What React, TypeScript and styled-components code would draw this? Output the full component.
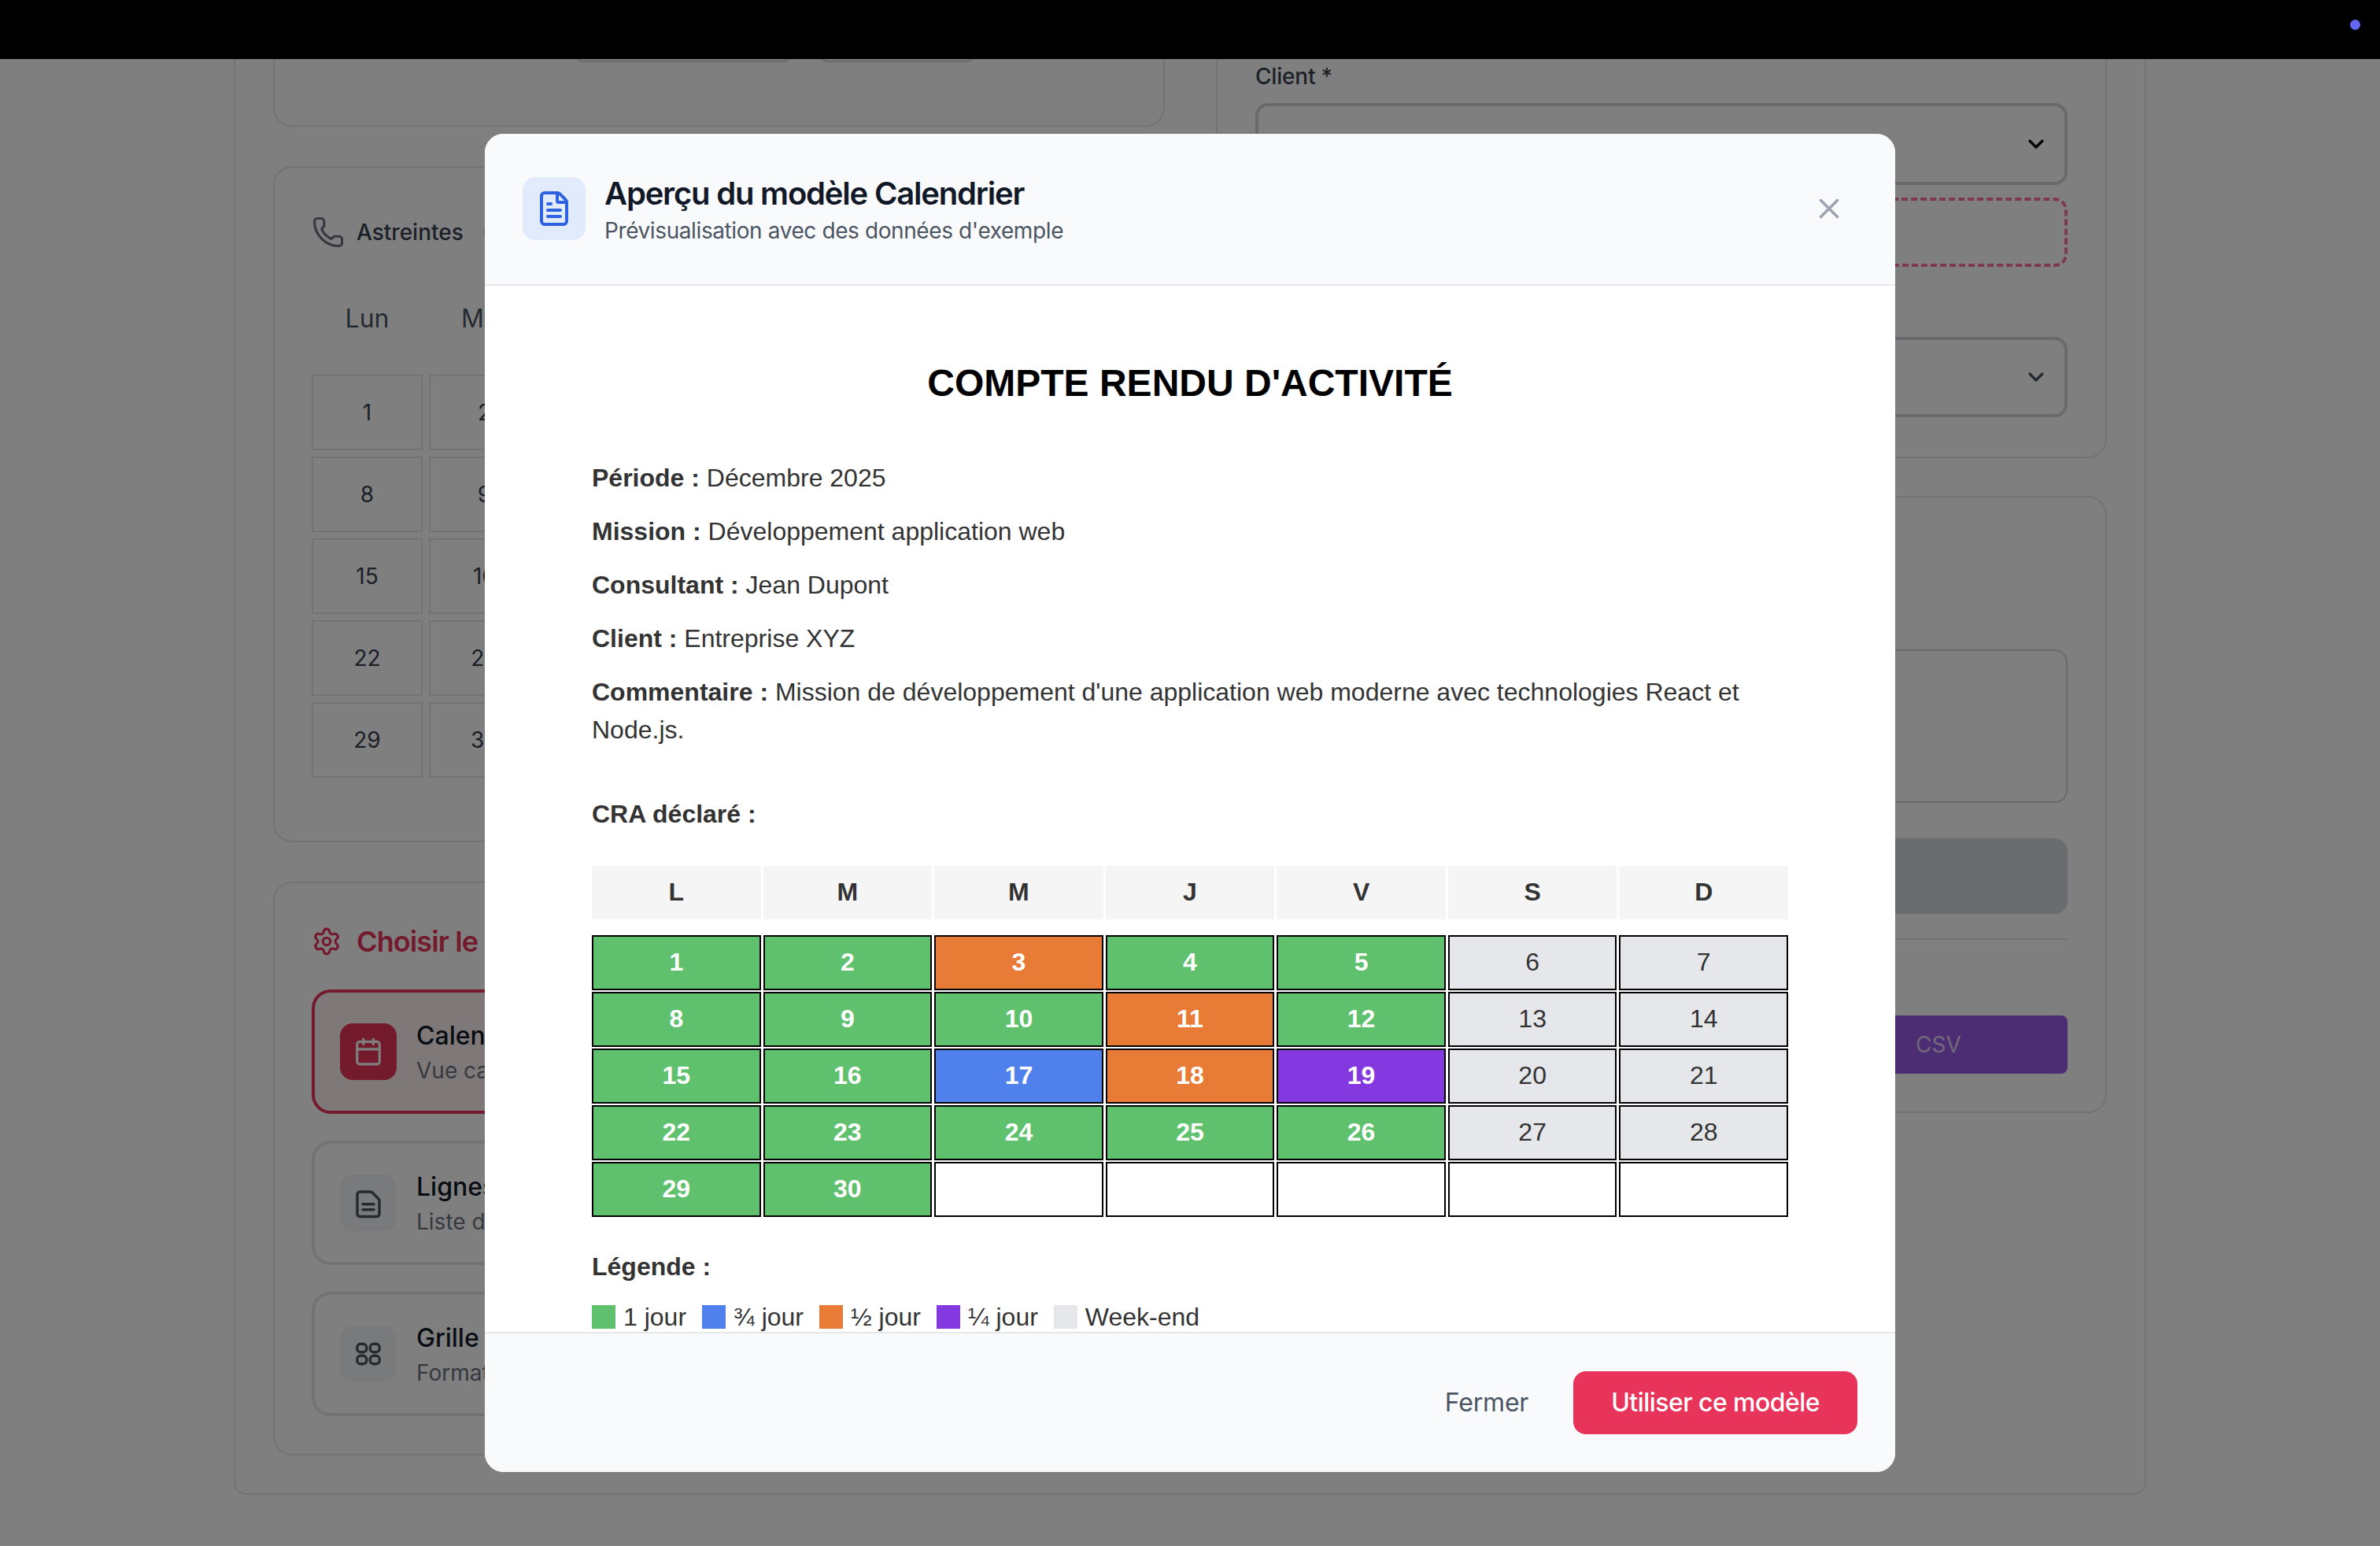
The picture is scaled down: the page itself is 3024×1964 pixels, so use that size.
import React from "react";
import styled, { createGlobalStyle } from "styled-components";
import { Phone, Settings, Calendar, FileText, ChevronDown, X } from "lucide-react";

const Global = createGlobalStyle`
  html, body { margin: 0; padding: 0; width: 3024px; height: 1964px; overflow: hidden; background: #fff; }
  * { box-sizing: border-box; }
  body { font-family: Inter, "Liberation Sans", sans-serif; }
`;

const Screen = styled.div`
  width: 3024px; height: 1964px; display: flex; flex-direction: column; overflow: hidden;
`;
const TopBar = styled.header`
  height: 75px; flex: none; background: #000; display: flex; align-items: center; justify-content: flex-end; padding: 0 25px 12px 0;
`;
const Dot = styled.span`
  width: 13px; height: 13px; border-radius: 50%; background: #6366f1;
`;
const Stage = styled.main`
  position: relative; flex: 1; min-height: 0; overflow: hidden; display: flex; flex-direction: column; justify-content: flex-end;
  padding: 0 297px 65px; background: #fefefe;
`;
const Sheet = styled.section`
  flex: none; display: grid; grid-template-columns: 1133px 1132px; column-gap: 65px; padding: 48px;
  border: 2px solid #e5e7eb; border-radius: 16px; background: #fff;
`;
const Col = styled.div<{ $gap: number }>`
  display: flex; flex-direction: column; gap: ${p => p.$gap}px;
`;
const Card = styled.div<{ $h: number }>`
  height: ${p => p.$h}px; border: 2px solid #e5e7eb; border-radius: 24px; padding: 48px 48px 48px 47px; display: flex; flex-direction: column; background: #fff;
`;
const CardEnd = styled(Card)`
  justify-content: flex-end; padding-left: 48px;
`;
const ChipCard = styled(CardEnd)`
  padding-bottom: 80px;
`;
const FormCard = styled(CardEnd)`
  padding-bottom: 50px;
`;
const ChipRow = styled.div`
  display: flex; gap: 35px; margin-left: 333px;
`;
const Chip = styled.div<{ $w: number }>`
  width: ${p => p.$w}px; height: 60px; border: 2px solid #d1d5db; border-radius: 12px;
`;
const TabRow = styled.div`
  display: flex; align-items: center; gap: 15px; height: 42px; margin-top: 13px; margin-bottom: 76px; font-size: 28px; font-weight: 500; color: #374151;
  svg { color: #6b7280; }
`;
const TabBadge = styled.span`
  width: 70px; height: 40px; margin-left: 11px; border: 3px solid #c9ccd1; border-radius: 20px;
`;
const Week = styled.div`
  display: grid; grid-template-columns: repeat(7, 141px); column-gap: 8px; row-gap: 8px;
`;
const DayHead = styled.div`
  text-align: center; font-size: 32px; line-height: 40px; color: #4b5563; margin-bottom: 51px; margin-top: -7px;
`;
const DayCell = styled.div`
  height: 96px; border: 2px solid #e5e7eb; display: flex; align-items: center; justify-content: center; font-size: 28px; color: #374151;
`;
const Heading = styled.div`
  display: flex; align-items: center; gap: 19px; height: 44px; margin: 4px 0 39px; font-size: 36px; font-weight: 600; letter-spacing: -0.9px; color: #e8345a;
`;
const Option = styled.div<{ $on?: boolean }>`
  height: 158px; border: 4px solid ${p => (p.$on ? "#e8345a" : "#e5e7eb")}; border-radius: 24px; background: ${p => (p.$on ? "#fff1f3" : "#fff")};
  display: flex; align-items: center; gap: 25px; padding: 0 32px; margin-bottom: 34px; &:last-child { margin-bottom: 0; }
`;
const OptIcon = styled.div<{ $on?: boolean }>`
  width: 72px; height: 72px; border-radius: 16px; flex: none; display: flex; align-items: center; justify-content: center;
  background: ${p => (p.$on ? "#e8345a" : "#f3f4f6")}; color: ${p => (p.$on ? "#fff" : "#4b5563")};
`;
const OptText = styled.div`
  display: flex; flex-direction: column; gap: 4px; padding-top: 3px;
`;
const OptTitle = styled.div`
  font-size: 32px; line-height: 40px; font-weight: 500; color: #111827;
`;
const OptSub = styled.div`
  font-size: 28px; line-height: 40px; color: #6b7280; white-space: nowrap;
`;
const Label = styled.label`
  font-size: 28px; line-height: 40px; font-weight: 500; letter-spacing: -0.2px; color: #374151; margin-bottom: 14px;
`;
const Select = styled.div<{ $h: number; $faded?: boolean }>`
  height: ${p => p.$h}px; flex: none; border: 4px solid #d1d5db; border-radius: 16px; display: flex; align-items: center; justify-content: flex-end; padding-right: 20px; color: ${p => (p.$faded ? "#4b5563" : "#000")}; background: #fff;
`;
const Dashed = styled.div`
  height: 88px; flex: none; margin: 16px 0 89px; border: 4px dashed #ff6fa8; border-radius: 16px;
`;
const TextArea = styled.div`
  height: 195px; flex: none; border: 2px solid #d1d5db; border-radius: 16px;
`;
const GrayBtn = styled.div`
  height: 96px; flex: none; margin-top: 45px; background: #d6d8de; border-radius: 16px;
`;
const Divider = styled.hr`
  width: 100%; height: 2px; border: 0; margin: 31px 0 96px; background: #e5e7eb; flex: none;
`;
const ExportRow = styled.div`
  display: flex; justify-content: flex-end;
`;
const CsvBtn = styled.div`
  width: 300px; height: 74px; padding-left: 107px; display: flex; align-items: center; background: #9858e6; border-radius: 8px; color: rgba(255,255,255,.72); font-size: 28px;
`;

const Overlay = styled.div`
  position: absolute; inset: 0; background: rgba(0,0,0,.5); display: flex; align-items: center; justify-content: center;
`;
const Modal = styled.div`
  width: 1792px; height: 1700px; background: #fff; border-radius: 24px; display: flex; flex-direction: column; overflow: hidden;
`;
const ModalHead = styled.div`
  height: 193px; flex: none; padding: 0 48px; background: #f9fafb; border-bottom: 2px solid #e5e7eb; display: flex; align-items: center; gap: 24px;
`;
const DocBadge = styled.div`
  width: 80px; height: 80px; flex: none; border-radius: 16px; background: #e1ebfc; color: #2f62e0; display: flex; align-items: center; justify-content: center;
`;
const HeadText = styled.div`
  flex: 1; display: flex; flex-direction: column;
`;
const ModalTitle = styled.h2`
  margin: 1px 0 -1px; font-size: 40px; line-height: 56px; font-weight: 600; letter-spacing: -1.2px; color: #111827;
`;
const ModalSub = styled.p`
  margin: 0; font-size: 28px; line-height: 40px; letter-spacing: -0.4px; color: #4b5563;
`;
const CloseBtn = styled.button`
  all: unset; width: 72px; height: 72px; display: flex; align-items: center; justify-content: center; color: #9ca3af;
`;
const ModalBody = styled.div`
  flex: 1; min-height: 0; overflow: hidden; padding: 96px 136px 0; font-family: "Liberation Sans", Arial, sans-serif; color: #333;
`;
const DocTitle = styled.h1`
  margin: 0 0 68px; text-align: center; font-size: 48px; line-height: 56px; font-weight: 700; color: #000;
`;
const Info = styled.p`
  margin: 0 0 20px; font-size: 32px; line-height: 48px; color: #333;
  b { font-weight: 700; }
`;
const SectionTitle = styled.p<{ $top: number; $bottom?: number }>`
  margin: ${p => p.$top}px 0 ${p => p.$bottom ?? 0}px; font-size: 32px; line-height: 48px; font-weight: 700; color: #333;
`;
const CalGrid = styled.div`
  display: grid; grid-template-columns: repeat(7, 1fr); column-gap: 3px; row-gap: 2px;
`;
const CalHeadCell = styled.div`
  height: 68px; background: #f5f5f5; display: flex; align-items: center; justify-content: center; font-size: 32px; font-weight: 700; color: #333; margin-bottom: 18px;
`;
const tones: Record<string, string> = { g: "#5fc16e", o: "#e87b36", b: "#4f80ec", p: "#8439e0", w: "#e5e7eb", e: "#fff" };
const CalCell = styled.div<{ $t: string }>`
  height: 70px; border: 2px solid #000; background: ${p => tones[p.$t]}; display: flex; align-items: center; justify-content: center; font-size: 32px;
  font-weight: ${p => (p.$t === "w" ? 400 : 700)}; color: ${p => (p.$t === "w" ? "#333" : "#fff")};
`;
const Legend = styled.div`
  display: flex; align-items: center; gap: 20px; margin-top: 16px; font-size: 32px; line-height: 48px; color: #333;
`;
const LegendItem = styled.span`
  display: flex; align-items: center; gap: 10px;
`;
const Swatch = styled.i<{ $t: string }>`
  width: 30px; height: 30px; display: block; background: ${p => tones[p.$t]};
`;
const ModalFoot = styled.div`
  height: 178px; flex: none; padding: 0 48px; background: #f9fafb; border-top: 2px solid #e5e7eb; display: flex; align-items: center; justify-content: flex-end; gap: 57px;
`;
const GhostBtn = styled.button`
  all: unset; font-size: 32px; font-weight: 400; letter-spacing: -0.2px; color: #4b5563;
`;
const PrimaryBtn = styled.button`
  all: unset; height: 80px; padding: 0 48px; border-radius: 16px; background: #e8345a; color: #fff; font-size: 32px; font-weight: 500; letter-spacing: -0.55px; display: flex; align-items: center;
`;

const LinesDocIcon = () => (
  <svg width="42" height="42" viewBox="0 0 24 24" fill="none" stroke="currentColor" strokeWidth="2" strokeLinecap="round" strokeLinejoin="round">
    <path d="M6 22a2 2 0 0 1-2-2V6a2 2 0 0 1 2-2h7.5a2 2 0 0 1 1.4.6l4.5 4.5a2 2 0 0 1 .6 1.4V20a2 2 0 0 1-2 2z" />
    <path d="M8 13h8" />
    <path d="M8 17h8" />
  </svg>
);
const PillGridIcon = () => (
  <svg width="36" height="36" viewBox="0 0 24 24" fill="none" stroke="currentColor" strokeWidth="2.2">
    <rect x="2.5" y="3.5" width="8" height="7" rx="3" />
    <rect x="13.5" y="3.5" width="8" height="7" rx="3" />
    <rect x="2.5" y="13.5" width="8" height="7" rx="3" />
    <rect x="13.5" y="13.5" width="8" height="7" rx="3" />
  </svg>
);

const days: [string, string][] = [
  ["1","g"],["2","g"],["3","o"],["4","g"],["5","g"],["6","w"],["7","w"],
  ["8","g"],["9","g"],["10","g"],["11","o"],["12","g"],["13","w"],["14","w"],
  ["15","g"],["16","g"],["17","b"],["18","o"],["19","p"],["20","w"],["21","w"],
  ["22","g"],["23","g"],["24","g"],["25","g"],["26","g"],["27","w"],["28","w"],
  ["29","g"],["30","g"],["","e"],["","e"],["","e"],["","e"],["","e"],
];
const legend: [string, string][] = [["g","1 jour"],["b","¾ jour"],["o","½ jour"],["p","¼ jour"],["w","Week-end"]];

export default function App() {
  return (
    <Screen>
      <Global />
      <TopBar><Dot /></TopBar>
      <Stage>
        <Sheet>
          <Col $gap={50}>
            <ChipCard $h={200}>
              <ChipRow><Chip $w={276} /><Chip $w={198} /></ChipRow>
            </ChipCard>
            <Card $h={859}>
              <TabRow><Phone size={42} strokeWidth={1.8} />Astreintes<TabBadge /></TabRow>
              <Week>
                {["Lun","Mar","Mer","Jeu","Ven","Sam","Dim"].map(d => <DayHead key={d}>{d}</DayHead>)}
              </Week>
              <Week>
                {Array.from({ length: 30 }, (_, i) => <DayCell key={i}>{i + 1}</DayCell>)}
              </Week>
            </Card>
            <Card $h={729}>
              <Heading><Settings size={38} strokeWidth={2} />Choisir le modèle</Heading>
              <Option $on>
                <OptIcon $on><Calendar size={38} strokeWidth={2} /></OptIcon>
                <OptText><OptTitle>Calendrier</OptTitle><OptSub>Vue calendrier mensuelle</OptSub></OptText>
              </Option>
              <Option>
                <OptIcon><LinesDocIcon /></OptIcon>
                <OptText><OptTitle>Lignes</OptTitle><OptSub>Liste des jours</OptSub></OptText>
              </Option>
              <Option>
                <OptIcon><PillGridIcon /></OptIcon>
                <OptText><OptTitle>Grille</OptTitle><OptSub>Format tableau</OptSub></OptText>
              </Option>
            </Card>
          </Col>
          <Col $gap={48}>
            <FormCard $h={621}>
              <Label>Client *</Label>
              <Select $h={104}><ChevronDown size={32} strokeWidth={2.4} /></Select>
              <Dashed />
              <Select $h={102} $faded><ChevronDown size={32} strokeWidth={2.4} /></Select>
            </FormCard>
            <CardEnd $h={784}>
              <TextArea />
              <GrayBtn />
              <Divider />
              <ExportRow><CsvBtn>CSV</CsvBtn></ExportRow>
            </CardEnd>
          </Col>
        </Sheet>
        <Overlay>
          <Modal>
            <ModalHead>
              <DocBadge><FileText size={48} strokeWidth={2} /></DocBadge>
              <HeadText>
                <ModalTitle>Aperçu du modèle Calendrier</ModalTitle>
                <ModalSub>Prévisualisation avec des données d'exemple</ModalSub>
              </HeadText>
              <CloseBtn><X size={42} strokeWidth={2} /></CloseBtn>
            </ModalHead>
            <ModalBody>
              <DocTitle>COMPTE RENDU D'ACTIVITÉ</DocTitle>
              <Info><b>Période :</b> Décembre 2025</Info>
              <Info><b>Mission :</b> Développement application web</Info>
              <Info><b>Consultant :</b> Jean Dupont</Info>
              <Info><b>Client :</b> Entreprise XYZ</Info>
              <Info><b>Commentaire :</b> Mission de développement d'une application web moderne avec technologies React et Node.js.</Info>
              <SectionTitle $top={59} $bottom={42}>CRA déclaré :</SectionTitle>
              <CalGrid>
                {["L","M","M","J","V","S","D"].map((d, i) => <CalHeadCell key={i}>{d}</CalHeadCell>)}
                {days.map(([n, t], i) => <CalCell key={i} $t={t}>{n}</CalCell>)}
              </CalGrid>
              <SectionTitle $top={39}>Légende :</SectionTitle>
              <Legend>
                {legend.map(([t, l]) => <LegendItem key={t}><Swatch $t={t} />{l}</LegendItem>)}
              </Legend>
            </ModalBody>
            <ModalFoot>
              <GhostBtn>Fermer</GhostBtn>
              <PrimaryBtn>Utiliser ce modèle</PrimaryBtn>
            </ModalFoot>
          </Modal>
        </Overlay>
      </Stage>
    </Screen>
  );
}
